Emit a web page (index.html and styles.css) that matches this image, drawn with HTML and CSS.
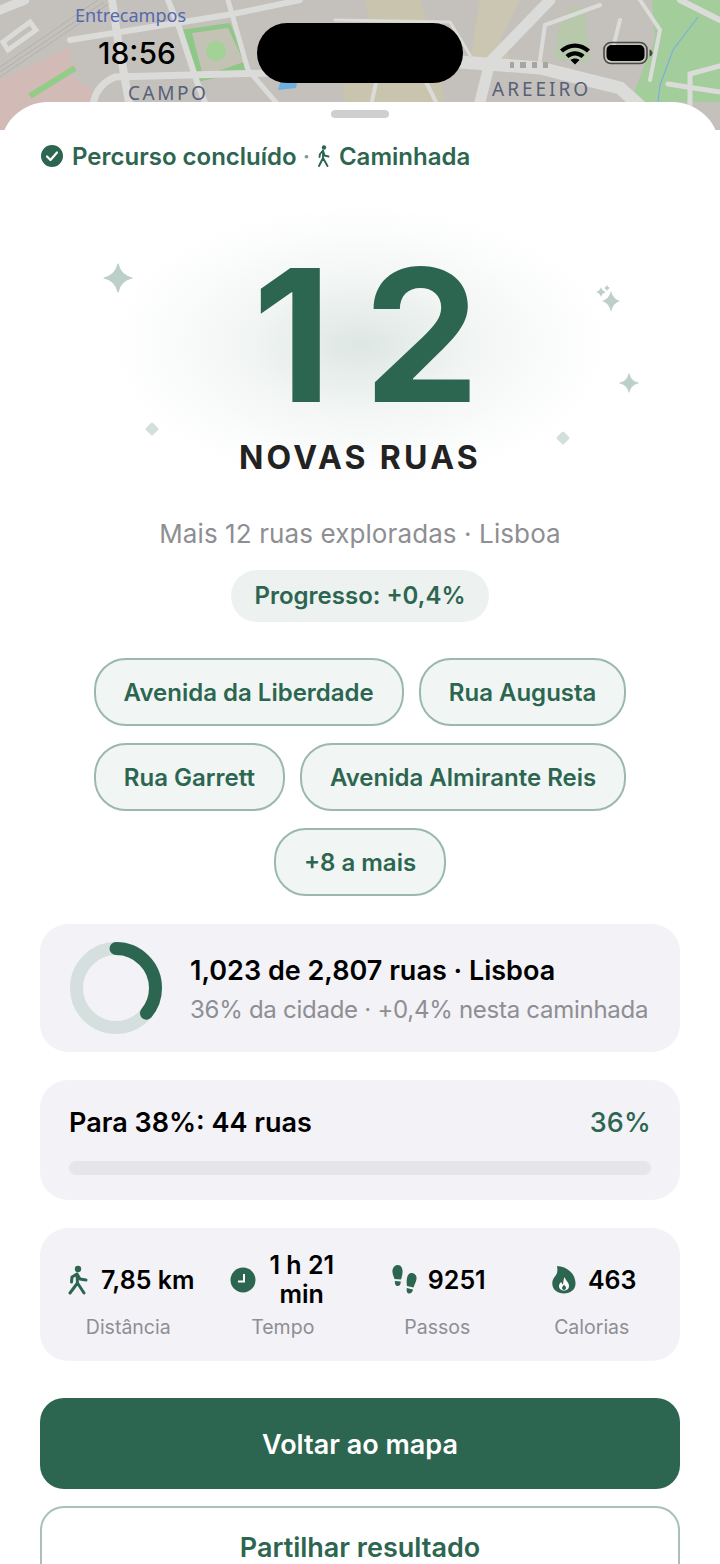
FILE: index.html
```html
<!doctype html>
<html lang="pt">
<head>
<meta charset="utf-8">
<title>Percurso concluído</title>
<link rel="stylesheet" href="styles.css">
</head>
<body>
<div class="screen">
	<!-- mapa de fundo -->
	<div class="map">
		<svg class="map-art" width="720" height="130" viewBox="0 0 720 130">
			<rect width="720" height="130" fill="#c4c0bb"/>
			<path d="M0 80 L70 47 L73 77 L93 90 L90 130 L0 130Z" fill="#d2bab6"/>
			<path d="M340 60 L440 60 L445 110 L345 110Z M365 0 L420 0 L430 28 L370 28Z" fill="#c9c4ad"/>
			<path d="M470 60 L510 60 L500 40 L520 0 L480 0Z" fill="#cbc6b2"/>
			<path d="M570 8 L585 8 L590 62 L555 60 L558 30Z" fill="#b7c9aa"/>
			<path d="M652 0 L720 0 L720 102 L630 102 L655 40Z" fill="#a3cd9b"/>
			<path d="M180 30 L230 23 L250 70 L197 82Z" fill="#8fc788"/>
			<path d="M192 33 L228 28 L244 62 L203 76Z" fill="#c4c2b4"/>
			<circle cx="216" cy="51" r="10" fill="#a2d296"/>
			<path d="M30 96 L75 68" stroke="#93cc87" stroke-width="6" fill="none"/>
			<path d="M282 76 L298 78 L296 88 L278 90Z" fill="#6fb0de"/>
			<g fill="none" stroke="#b3b0aa" stroke-width="1">
				<path d="M0 77 L110 3 M0 72 L104 2 M0 67 L98 0"/>
			</g>
			<g fill="none" stroke="#dbdbd9" stroke-linecap="round">
				<path d="M3 42 L30 22 L36 30 L8 50Z" stroke-width="5"/>
				<path d="M0 10 L25 0" stroke-width="9"/>
				<path d="M70 40 L233 14 L300 0" stroke-width="6"/>
				<path d="M112 0 L118 40 L130 108" stroke-width="8"/>
				<path d="M168 0 L180 30 L197 82 L208 110" stroke-width="6"/>
				<path d="M93 105 Q96 85 115 77 L270 73" stroke-width="7"/>
				<path d="M228 0 L248 70 L300 130" stroke-width="5"/>
				<path d="M460 62 L540 68 L620 88 L650 115" stroke-width="13"/>
				<path d="M550 0 L490 62 L478 110" stroke-width="11"/>
				<path d="M335 20 L450 22 L470 55" stroke-width="3"/>
				<path d="M380 65 L370 110 M420 70 L440 110 M540 60 L545 25 L600 5 M620 20 L610 60 M640 0 L660 30 L650 80" stroke-width="4"/>
				<path d="M690 130 L690 74 L720 66 M668 84 L720 92" stroke-width="5"/>
				<path d="M680 0 L720 20" stroke-width="6"/>
			</g>
			<path d="M698 17 L673 50 L660 85 L658 102" stroke="#7ab1dc" stroke-width="1.200" fill="none"/>
			<path d="M510 62 h4 v6 h-4z M520 62 h6 v6 h-6z M532 62 h5 v6 h-5z M543 62 h5 v6 h-5z" fill="#a7a5a0"/>
		</svg>
		<span class="map-label map-label-station">Entrecampos</span>
		<span class="map-label map-label-campo">CAMPO</span>
		<span class="map-label map-label-areeiro">AREEIRO</span>
	</div>

	<!-- barra de estado -->
	<div class="statusbar">
		<span class="clock">18:56</span>
		<span class="island"></span>
		<svg class="wifi" width="32" height="24" viewBox="0 0 32 24">
			<path d="M1 8.500 C9.500 .5 22.500 .5 31 8.500 L28 11.600 C21 5 11 5 4 11.600Z M6.500 14 C12 9 20 9 25.500 14 L22.500 17 C18.500 13.500 13.500 13.500 9.500 17Z M11.500 19 C14 17 18 17 20.500 19 L16 23.500Z" fill="#000"/>
		</svg>
		<svg class="battery" width="50" height="24" viewBox="0 0 50 24">
			<rect x="1" y="1.500" width="43" height="21" rx="7" fill="none" stroke="#4a4843" stroke-width="1.600"/>
			<rect x="3.500" y="4" width="38" height="16" rx="5" fill="#000"/>
			<path d="M46.500 8.500 C48.500 9 49.500 10.500 49.500 12 C49.500 13.500 48.500 15 46.500 15.500Z" fill="#4a4843"/>
		</svg>
	</div>

	<div class="sheet">
		<div class="handle"></div>

		<div class="route-status">
			<svg class="check" width="24" height="24" viewBox="0 0 24 24">
				<circle cx="12" cy="12" r="11" fill="#2d6650"/>
				<path d="M7 12.500 L10.500 16 L17 8.500" fill="none" stroke="#fff" stroke-width="2.200" stroke-linecap="round" stroke-linejoin="round"/>
			</svg>
			<span>Percurso concluído</span>
			<i class="dot">·</i>
			<svg class="walk-small" width="16" height="22" viewBox="0 0 16 22">
				<circle cx="8" cy="2.500" r="2.200" fill="#2d6650"/>
				<path d="M7 5.500 L4 9 L3.500 12 M7 5.500 L8.500 10.500 L12.500 11.500 M7 6 L7 13 M7 13 L3 21 M7 13 L11.500 21" fill="none" stroke="#2d6650" stroke-width="1.900" stroke-linecap="round" stroke-linejoin="round"/>
			</svg>
			<span>Caminhada</span>
		</div>

		<div class="hero">
			<div class="glow"></div>
			<svg class="spark spark-a" width="30" height="30" viewBox="0 0 30 30"><path d="M15 1 Q17.500 12.500 29 15 Q17.500 17.500 15 29 Q12.500 17.500 1 15 Q12.500 12.500 15 1Z" fill="#bccfc8" stroke="#bccfc8" stroke-width="1.200" stroke-linejoin="round"/></svg>
			<svg class="spark spark-b" width="26" height="30" viewBox="0 0 26 30">
				<path d="M15 6 Q17 14 24 16 Q17 18 15 27 Q13 18 6 16 Q13 14 15 6Z" fill="#bccfc8"/>
				<path d="M5 2 Q6 6 10 7 Q6 8 5 12 Q4 8 0 7 Q4 6 5 2Z" fill="#bccfc8"/>
				<path d="M11 0 Q11.500 2 14 3 Q11.500 4 11 6 Q10.500 4 8 3 Q10.500 2 11 0Z" fill="#bccfc8"/>
			</svg>
			<svg class="spark spark-c" width="20" height="20" viewBox="0 0 30 30"><path d="M15 1 Q17.500 12.500 29 15 Q17.500 17.500 15 29 Q12.500 17.500 1 15 Q12.500 12.500 15 1Z" fill="#bccfc8" stroke="#bccfc8" stroke-width="1.200" stroke-linejoin="round"/></svg>
			<i class="diamond diamond-a"></i>
			<i class="diamond diamond-b"></i>
			<div class="count">12</div>
			<div class="count-label">NOVAS RUAS</div>
		</div>

		<p class="summary">Mais 12 ruas exploradas · Lisboa</p>
		<div class="progress-pill">Progresso: +0,4%</div>

		<div class="chips">
			<span class="chip">Avenida da Liberdade</span>
			<span class="chip">Rua Augusta</span>
			<span class="chip">Rua Garrett</span>
			<span class="chip">Avenida Almirante Reis</span>
			<span class="chip">+8 a mais</span>
		</div>

		<div class="card city-card">
			<svg width="92" height="92" viewBox="0 0 92 92">
				<circle cx="46" cy="46" r="39.500" fill="none" stroke="#d5dfdd" stroke-width="13"/>
				<circle cx="46" cy="46" r="39.500" fill="none" stroke="#2d6650" stroke-width="13" stroke-linecap="round" pathLength="100" stroke-dasharray="36 100" transform="rotate(-90 46 46)"/>
			</svg>
			<div class="city-text">
				<div class="city-title">1,023 de 2,807 ruas · Lisboa</div>
				<div class="city-sub">36% da cidade · +0,4% nesta caminhada</div>
			</div>
		</div>

		<div class="card goal-card">
			<div class="goal-head">
				<span class="goal-title">Para 38%: 44 ruas</span>
				<span class="goal-value">36%</span>
			</div>
			<div class="goal-track"></div>
		</div>

		<div class="card stats">
			<div class="stat">
				<div class="stat-main stat-main-dist">
					<svg width="22" height="30" viewBox="0 0 22 30">
						<circle cx="11" cy="4" r="3.200" fill="#2d6650"/>
						<path d="M10 9 L5 12 L4.500 17 M10 9 L13 14 L19 15 M10 9 L10.500 18 M10.500 18 L3 28 M10.500 18 L17 28" fill="none" stroke="#2d6650" stroke-width="3" stroke-linecap="round" stroke-linejoin="round"/>
					</svg>
					<span class="stat-value">7,85 km</span>
				</div>
				<div class="stat-label">Distância</div>
			</div>
			<div class="stat">
				<div class="stat-main">
					<svg width="26" height="26" viewBox="0 0 26 26">
						<circle cx="13" cy="13" r="12.500" fill="#2d6650"/>
						<path d="M14 7 V14.500 H8" fill="none" stroke="#fff" stroke-width="2"/>
					</svg>
					<span class="stat-value stat-value-wrap">1 h 21 min</span>
				</div>
				<div class="stat-label">Tempo</div>
			</div>
			<div class="stat">
				<div class="stat-main stat-main-steps">
					<svg width="26" height="30" viewBox="0 0 26 30">
						<path d="M6 0 C9.500 0 11 4 10.500 8 C10.200 11 9.500 13 9 14.500 L2.500 14 C1.500 11 0 8 0.500 5 C1 2 3 0 6 0Z M2.800 16 L8.800 16.500 C8.800 19.500 7.500 21 5.500 21 C3.500 21 2.800 18.500 2.800 16Z" fill="#2d6650"/>
						<path d="M19.500 8 C22.500 8 25 10.500 24.500 14 C24 17 22.500 19.500 21.500 22.500 L15 21 C14.500 18 14.500 15.500 15 13 C15.500 10 17 8 19.500 8Z M14.800 23 L21 24.500 C20.500 27.500 18.500 29 16.500 28.500 C14.500 28 14.500 25.500 14.800 23Z" fill="#2d6650"/>
					</svg>
					<span class="stat-value">9251</span>
				</div>
				<div class="stat-label">Passos</div>
			</div>
			<div class="stat">
				<div class="stat-main stat-main-cal">
					<svg width="24" height="28" viewBox="0 0 24 28">
						<path d="M5 0 C13 0 23 6 23.500 17 C23.800 23.500 18.500 27.500 12 27.500 C5.500 27.500 0 23.500 0.300 17 C0.500 12 4 10 5 7 C5.500 5 5.500 2 5 0Z" fill="#2d6650"/>
						<path d="M12.500 11 C13 14 17 16 17 20 C17 23 14.500 24.500 12 24.500 C9.500 24.500 7 23 7 20 C7 18 8.500 16.500 9.500 16 C9.500 17 10 18 11 18.500 C11.500 16 11.500 13 12.500 11Z" fill="#fff"/>
						<path d="M12 18.500 C13 20 14 20.500 14 22 C14 23 13 24 12 24 C11 24 10 23 10 22 C10 20.500 11.500 20 12 18.500Z" fill="#2d6650"/>
					</svg>
					<span class="stat-value">463</span>
				</div>
				<div class="stat-label">Calorias</div>
			</div>
		</div>

		<a class="btn btn-primary">Voltar ao mapa</a>
		<a class="btn btn-outline">Partilhar resultado</a>
	</div>
</div>
</body>
</html>
```
FILE: styles.css
```css
*{ margin:0; padding:0; box-sizing:border-box;}
html,body{ background:#fff;}
body{ font-family:Inter,"Liberation Sans",sans-serif; color:#000;}
svg{ flex:none;}
.screen{ width:720px; height:1564px; position:relative; overflow:hidden;}

/* mapa */
.map{ position:absolute; left:0; top:0; width:720px; height:130px; overflow:hidden;}
.map-art{ display:block;}
.map-label{ position:absolute; font-family:"Noto Sans",sans-serif; white-space:nowrap;}
.map-label-station{ left:75px; top:3px; font-size:18px; line-height:24px; color:#5469ae;}
.map-label-campo{ left:128px; top:80px; font-size:19px; line-height:26px; letter-spacing:2.500px; color:#566079;}
.map-label-areeiro{ left:492px; top:76px; font-size:19px; line-height:26px; letter-spacing:3px; color:#566079;}

/* barra de estado */
.statusbar{ position:absolute; left:0; top:22px; width:720px; height:61px;}
.clock{ position:absolute; left:98px; top:13px; font-size:30px; line-height:36px; font-weight:500;}
.island{ position:absolute; left:257px; top:1px; width:206px; height:60px; border-radius:30px; background:#000;}
.wifi{ position:absolute; left:559px; top:19px;}
.battery{ position:absolute; left:603px; top:19px;}

/* folha */
.sheet{ position:relative; margin-top:102px; height:1462px; background:#fff; border-radius:48px 48px 0 0; padding:8px 40px 0; display:flex; flex-direction:column; align-items:center;}
.sheet > *{ flex:none;}
.handle{ width:58px; height:8px; border-radius:4px; background:#cfcfd1;}
.route-status{ align-self:flex-start; margin-top:23px; height:30px; display:flex; align-items:center; gap:6px; font-size:24px; font-weight:560; color:#2d6650;}
.route-status .check{ margin-right:2px;}
.route-status .walk-small{ margin-right:1px;}
.route-status .dot{ font-style:normal; font-weight:500; color:#7d9c90;}

.hero{ position:relative; width:640px; height:305px; margin-top:17px; text-align:center;}
.glow{ position:absolute; left:70px; top:17px; width:500px; height:280px; border-radius:50%; background:radial-gradient(closest-side,rgba(45,102,80,.16),rgba(45,102,80,.055) 50%,rgba(45,102,80,.02) 80%,rgba(45,102,80,0));}
.spark{ position:absolute;}
.spark-a{ left:63px; top:75px;}
.spark-b{ left:556px; top:97px;}
.spark-c{ left:579px; top:185px;}
.diamond{ position:absolute; width:10px; height:10px; border-radius:1.500px; background:#d3dfdb; transform:rotate(45deg);}
.diamond-a{ left:107px; top:236px;}
.diamond-b{ left:518px; top:245px;}
.count{ position:relative; padding-left:44px; font-size:184px; line-height:150px; letter-spacing:32px; font-weight:700; font-optical-sizing:none; color:#2d6650; margin-top:72px;}
.count-label{ position:relative; margin-top:28px; font-size:32px; line-height:40px; font-weight:700; font-optical-sizing:none; letter-spacing:3.300px; color:#222;}

.summary{ margin-top:24px; font-size:26px; line-height:34px; letter-spacing:.1px; color:#8e8e93; white-space:nowrap;}
.progress-pill{ margin-top:19px; height:52px; padding:0 23px; border-radius:26px; background:#edf2f0; color:#2d6650; font-size:24px; font-weight:560; line-height:52px;}

.chips{ width:640px; margin-top:36px; display:flex; flex-wrap:wrap; justify-content:center; gap:17px 15px;}
.chip{ height:68px; padding:0 28px; border:2px solid #9ab8ac; border-radius:32px; background:#f1f6f4; color:#2d6650; font-size:24px; font-weight:560; line-height:65px; white-space:nowrap;}

.card{ width:640px; background:#f2f2f7; border-radius:28px;}
.city-card{ height:128px; margin-top:28px; padding:0 30px; display:flex; align-items:center; gap:28px;}
.city-text{ padding-top:2px;}
.city-title{ font-size:27px; line-height:34px; font-weight:560;}
.city-sub{ margin-top:7px; font-size:24px; line-height:30px; letter-spacing:-.27px; color:#8e8e93; white-space:nowrap;}

.goal-card{ height:120px; margin-top:28px; padding:25px 29px 0 29px;}
.goal-head{ display:flex; justify-content:space-between; align-items:center; height:34px;}
.goal-title{ font-size:27px; font-weight:560;}
.goal-value{ font-size:27px; font-weight:500; letter-spacing:.2px; color:#2d6650;}
.goal-track{ margin-top:22px; height:14px; border-radius:7px; background:#e5e5ea;}

.stats{ height:133px; margin-top:28px; padding:0 11px; display:grid; grid-template-columns:repeat(4,1fr); align-items:center;}
.stat{ display:flex; flex-direction:column; align-items:center;}
.stat-main{ height:60px; padding-top:2px; display:flex; align-items:center; justify-content:center; gap:12px;}
.stat-main-dist{ padding-left:5px;}
.stat-main-steps{ padding-left:3px; gap:10px;}
.stat-main-cal{ padding-left:5px;}
.stat-value{ font-size:25px; line-height:29px; font-weight:560; text-align:center;}
.stat-value-wrap{ width:68px;}
.stat-label{ margin-top:5px; font-size:19.500px; line-height:26px; color:#8e8e93;}

.btn{ display:block; width:640px; border-radius:24px; text-align:center; font-size:27px; font-weight:560;}
.btn-primary{ height:91px; margin-top:37px; line-height:93px; background:#2d6650; color:#fff;}
.btn-outline{ height:58px; margin-top:17px; padding-top:25px; line-height:30px; border:2px solid #a9c1b8; border-bottom:0; border-radius:24px 24px 0 0; color:#2d6650; background:#fff;}
```
